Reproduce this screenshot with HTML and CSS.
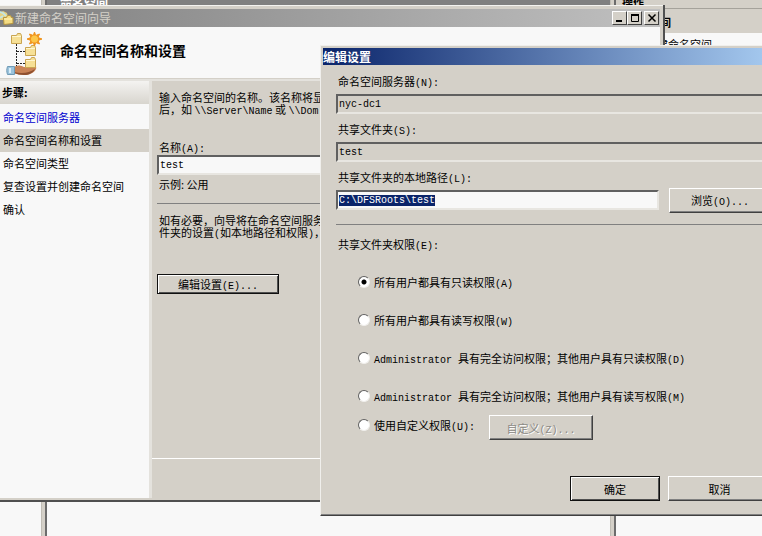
FILE: index.html
```html
<!DOCTYPE html>
<html lang="zh-CN">
<head>
    <meta charset="UTF-8">
    <meta name="viewport" content="width=device-width, initial-scale=1.0">
    <title>新建命名空间向导</title>
    <link rel="stylesheet" href="styles.css">
</head>
<body>
    <div class="desktop">
        <!-- Management console behind the wizard -->
        <div class="console">
            <div class="console-tree"></div>
            <div class="splitter"></div>
            <div class="console-main">
                <div class="console-title">命名空间</div>
            </div>
            <div class="splitter"></div>
            <div class="console-actions">
                <div class="actions-title">操作</div>
                <div class="actions-group">命名空间</div>
                <a class="actions-link" href="#">新建命名空间</a>
            </div>
        </div>

        <!-- Wizard window -->
        <section class="window wizard">
            <div class="titlebar titlebar-inactive">
                <svg class="titlebar-icon" width="14" height="16" viewBox="0 0 14 16">
                    <path d="M0 3l3-2 4 2 1 4-4 3H0z" fill="#e9d27c"/>
                    <path d="M0 2l3 1 3 3M0 8l3-2" fill="none" stroke="#c4e4e0" stroke-width="2"/>
                    <path d="M3.500 7.500h3l1-2h3l1 2h1.500v6l-9 1z" fill="#f4dc83" stroke="#b6953f"/>
                    <path d="M4 9h8" stroke="#fff4bd"/>
                </svg>
                <span class="titlebar-text">新建命名空间向导</span>
                <div class="titlebar-buttons">
                    <button class="caption-btn" aria-label="最小化">
                        <svg width="10" height="10" viewBox="0 0 10 10"><path d="M1 8h6" stroke="#000" stroke-width="2"/></svg>
                    </button>
                    <button class="caption-btn" aria-label="最大化">
                        <svg width="10" height="10" viewBox="0 0 10 10"><path d="M1.500 1v7.500h7V1" fill="none" stroke="#000"/><path d="M1 2h8" stroke="#000" stroke-width="2"/></svg>
                    </button>
                    <button class="caption-btn caption-close" aria-label="关闭">
                        <svg width="10" height="10" viewBox="0 0 10 10"><path d="M1.500 1.500l7 7M8.500 1.500l-7 7" stroke="#000" stroke-width="1.500"/></svg>
                    </button>
                </div>
            </div>

            <header class="wizard-header">
                <svg class="wizard-icon" width="38" height="46" viewBox="0 0 38 46">
                    <path d="M11.500 14v22M12 21.500h8M12 33.500h8" fill="none" stroke="#222" stroke-dasharray="2 1"/>
                    <!-- folders -->
                    <path d="M6.500 5.500h5l1-2h3l1 2v8h-10z" fill="#f6e096" stroke="#c9a552"/>
                    <path d="M7 6.500h9" stroke="#fff7d0"/>
                    <path d="M20.500 17.500h5l1-2h3l1 2v8h-10z" fill="#f6e096" stroke="#c9a552"/>
                    <path d="M21 18.500h9" stroke="#fff7d0"/>
                    <!-- star -->
                    <path d="M29.500 2l1.200 3.500L34.500 4 33 7.500l4 1.500-4 1.500 1.500 3.500-3.800-1.500L29.500 16l-1.200-3.500L24.500 14l1.500-3.500L22 9l4-1.500L24.500 4l3.800 1.500z" fill="#f0941c" stroke="#f0941c"/>
                    <circle cx="29.500" cy="9" r="3.500" fill="#fdc748"/>
                    <!-- hand -->
                    <path d="M9 37c4-2 7-2 10 0h8c3-1 5-1 4 2-2 4-7 6-12 6-4 0-7-1-10-2z" fill="#c98357"/>
                    <path d="M9 42c8 2 15 1 21-3-2 4-6 6-11 6-4 0-7-1-10-2z" fill="#8f5130"/>
                    <path d="M2.500 36.500h7v8h-7c-1-3-1-5 0-8z" fill="#9bc3dc" stroke="#6f9ab5"/>
                    <path d="M4 38h2v5H4z" fill="#d8edf8"/>
                    <path d="M20.500 29.500h5l1-2h3l1 2v8h-10z" fill="#f6e096" stroke="#c9a552"/>
                    <path d="M21 30.500h9" stroke="#fff7d0"/>
                </svg>
                <h1 class="wizard-title">命名空间名称和设置</h1>
            </header>

            <div class="wizard-body">
                <nav class="steps">
                    <h2 class="steps-title">步骤:</h2>
                    <ul class="steps-list">
                        <li><a href="#">命名空间服务器</a></li>
                        <li class="current">命名空间名称和设置</li>
                        <li>命名空间类型</li>
                        <li>复查设置并创建命名空间</li>
                        <li>确认</li>
                    </ul>
                </nav>

                <div class="wizard-page">
                    <div class="page-content">
                        <p class="hint">输入命名空间的名称。该名称将显<br>后，如 <span class="en">\\Server\Name</span> 或 <span class="en">\\Dom</span></p>
                        <label class="name-label" for="name">名称<span class="en">(A):</span></label>
                        <input class="field" type="text" id="name" value="test">
                        <p class="example">示例: 公用</p>
                        <hr class="line">
                        <p class="hint">如有必要，向导将在命名空间服务<br>件夹的设置<span class="en">(</span>如本地路径和权限<span class="en">)</span>，</p>
                        <button class="btn btn-default btn-edit">编辑设置<span class="en">(E)...</span></button>
                    </div>
                    <div class="page-footer"></div>
                </div>
            </div>
        </section>

        <!-- Edit settings dialog -->
        <section class="window dialog">
            <div class="titlebar titlebar-active">
                <span class="titlebar-text">编辑设置</span>
            </div>
            <form class="dialog-body">
                <label class="field-label" for="server">命名空间服务器<span class="en">(N):</span></label>
                <input class="field field-readonly" type="text" id="server" value="nyc-dc1" readonly>
                <label class="field-label" for="share">共享文件夹<span class="en">(S):</span></label>
                <input class="field field-readonly" type="text" id="share" value="test" readonly>
                <label class="field-label" for="path">共享文件夹的本地路径<span class="en">(L):</span></label>
                <div class="path-row">
                    <input class="field" type="text" id="path" value="C:\DFSRoots\test">
                    <button class="btn btn-browse" type="button">浏览<span class="en">(O)...</span></button>
                </div>
                <hr class="line">
                <fieldset class="permissions">
                    <legend class="field-label">共享文件夹权限<span class="en">(E):</span></legend>
                    <div class="option"><input type="radio" name="perm" id="perm-a" checked><label for="perm-a">所有用户都具有只读权限<span class="en">(A)</span></label></div>
                    <div class="option"><input type="radio" name="perm" id="perm-w"><label for="perm-w">所有用户都具有读写权限<span class="en">(W)</span></label></div>
                    <div class="option"><input type="radio" name="perm" id="perm-d"><label for="perm-d"><span class="en">Administrator </span>具有完全访问权限；其他用户具有只读权限<span class="en">(D)</span></label></div>
                    <div class="option"><input type="radio" name="perm" id="perm-m"><label for="perm-m"><span class="en">Administrator </span>具有完全访问权限；其他用户具有读写权限<span class="en">(M)</span></label></div>
                    <div class="option option-custom">
                        <input type="radio" name="perm" id="perm-u"><label for="perm-u">使用自定义权限<span class="en">(U):</span></label>
                        <button class="btn btn-custom" type="button" disabled>自定义<span class="en">(Z)...</span></button>
                    </div>
                </fieldset>
                <div class="dialog-footer">
                    <button class="btn btn-default" type="button">确定</button>
                    <button class="btn" type="button">取消</button>
                </div>
            </form>
        </section>
    </div>

    <script>
        // Start with the local path selected
        const path = document.getElementById('path');
        path.focus();
        path.select();
    </script>
</body>
</html>
```

FILE: styles.css
```css
* {
    box-sizing: border-box;
}

body {
    margin: 0;
    font-family: "Noto Sans CJK SC", sans-serif;
    font-size: 11px;
    line-height: 20px;
    color: #000;
    background: #f8f8f8;
}

h1, h2, p, ul {
    margin: 0;
    padding: 0;
}

.en {
    font-family: "Liberation Mono", monospace;
    font-size: 10px;
    line-height: 1;
    white-space: pre;
}

.desktop {
    position: relative;
    height: 100vh;
    overflow: hidden;
}

/* Console */
.console {
    display: flex;
    height: 100%;
}

.console-tree {
    width: 41px;
    background: #f8f8f8;
}

.splitter {
    width: 6px;
    background: #d4d0c8;
    border-left: 1px solid #c0bdb5;
    border-right: 2px solid #6c6c6c;
}

.console-main {
    flex: 1;
}

.console-title {
    height: 24px;
    padding-left: 13px;
    line-height: 6px;
    font-size: 12px;
    font-weight: bold;
    color: #fff;
    background: #808080;
}

.console-actions {
    width: 146px;
}

.actions-title {
    height: 9px;
    padding-left: 6px;
    line-height: 4px;
    font-weight: bold;
    background: #d4d0c8;
    border-bottom: 1px solid #a5a29b;
}

.actions-group {
    height: 24px;
    padding-left: 11px;
    line-height: 27px;
    font-weight: bold;
    background: #d4d0c8;
}

.actions-link {
    display: block;
    padding-left: 30px;
    line-height: 22px;
    color: #000;
    text-decoration: none;
}

/* Windows */
.window {
    position: absolute;
    display: flex;
    flex-direction: column;
    background: #d4d0c8;
}

.titlebar {
    display: flex;
    align-items: center;
    height: 17px;
    font-size: 12px;
    white-space: nowrap;
}

.titlebar-inactive {
    height: 18px;
    color: #d4d0c8;
    background: linear-gradient(to right, #808080, #c0c0c0);
}

.titlebar-active {
    color: #fff;
    font-weight: bold;
    background: linear-gradient(to right, #0a246a, #a6caf0);
}

.titlebar-icon {
    margin-right: 1px;
}

.titlebar-text {
    flex: 1;
}

.titlebar-buttons {
    display: flex;
    padding-right: 1px;
}

.caption-btn {
    display: flex;
    align-items: center;
    justify-content: center;
    width: 15px;
    height: 14px;
    padding: 0;
    background: #d4d0c8;
    border: 1px solid;
    border-color: #fff #404040 #404040 #fff;
}

.caption-close {
    margin-left: 2px;
}

.wizard {
    top: 5px;
    bottom: 34px;
    left: 0;
    right: 97px;
    padding: 4px 3px 2px 0;
    border-right: 2px solid #505050;
    border-bottom: 2px solid #505050;
    box-shadow: inset 0 1px #f4f3f0;
}

.wizard-header {
    display: flex;
    align-items: center;
    height: 52px;
    padding-left: 5px;
    background: #f8f8f8;
    border-bottom: 1px solid #d4d0c8;
}

.wizard-title {
    margin-left: 17px;
    padding-bottom: 6px;
    font-size: 14px;
    font-weight: bold;
}

.wizard-body {
    display: flex;
    flex: 1;
    border-top: 2px solid #e4e2dd;
}

.steps {
    width: 152px;
    background: #f8f8f8;
    border-right: 3px solid #e4e2dd;
}

.steps-title {
    height: 23px;
    padding-left: 2px;
    font-size: 11px;
    font-weight: bold;
    line-height: 23px;
    background: linear-gradient(to bottom, #f4f3f1, #d8d5ce);
}

.steps-list {
    padding-top: 2px;
    list-style: none;
}

.steps-list li {
    padding-left: 3px;
    line-height: 23px;
}

.steps-list a {
    color: #0000d0;
    text-decoration: none;
}

.steps-list .current {
    background: #d4d0c8;
}

.wizard-page {
    display: flex;
    flex: 1;
    flex-direction: column;
}

.page-content {
    display: flex;
    flex: 1;
    flex-direction: column;
    padding: 10px 5px 0;
}

.page-footer {
    height: 40px;
    border-top: 1px solid #fff;
}

.hint {
    padding-left: 2px;
    line-height: 12px;
    white-space: nowrap;
}

.name-label {
    margin-top: 22px;
    padding-left: 2px;
    line-height: 16px;
}

.example {
    padding-left: 2px;
    line-height: 18px;
}

.line {
    width: 100%;
    height: 1px;
    margin: 10px 0;
    background: #808080;
    border: 0;
}

/* Controls */
.field {
    display: block;
    width: 100%;
    height: 20px;
    padding: 0 1px;
    font-family: "Liberation Mono", monospace;
    font-size: 10px;
    color: #000;
    background: #f8f8f8;
    border: 2px solid;
    border-color: #606060 #e8e6e1 #e8e6e1 #606060;
    outline: none;
}

.field::selection {
    color: #fff;
    background: #0a246a;
}

.field-readonly {
    background: #d4d0c8;
}

.btn {
    width: 104px;
    height: 25px;
    padding: 0;
    font-family: inherit;
    font-size: 11px;
    line-height: 20px;
    color: #000;
    background: #d4d0c8;
    border: 1px solid;
    border-color: #fff #404040 #404040 #fff;
    box-shadow: inset -1px -1px #808080;
}

.btn-default {
    border: 1px solid #101010;
    box-shadow: inset 1px 1px #fff, inset -1px -1px #505050;
}

.btn:disabled {
    color: #8c8a85;
    text-shadow: 1px 1px #fff;
}

.btn-edit {
    width: 122px;
    height: 20px;
    margin-top: 34px;
    line-height: 16px;
}

/* Dialog */
.dialog {
    top: 45px;
    left: 320px;
    right: -12px;
    padding: 2px;
    border: 1px solid;
    border-color: #f0efec #404040 #404040 #f0efec;
    box-shadow: inset -1px -1px #808080;
}

.dialog-body {
    padding: 7px 0 12px 13px;
}

.field-label {
    display: block;
    height: 20px;
    margin-bottom: 2px;
    padding: 0 2px;
    line-height: 18px;
}

.field + .field-label {
    margin-top: 6px;
}

.path-row {
    display: flex;
    gap: 10px;
    height: 20px;
    align-items: center;
}

.path-row .field {
    flex: 1;
}

.btn-browse {
    width: 102px;
}

.dialog-body .line {
    margin-top: 14px;
}

.permissions {
    margin: 0;
    padding: 0 0 0 22px;
    border: 0;
}

.permissions legend {
    margin: 0 0 8px -22px;
}

.option {
    display: flex;
    align-items: center;
    height: 38px;
    white-space: nowrap;
}

.option input {
    width: 12px;
    height: 12px;
    margin: 0 4px 0 0;
    appearance: none;
    background: #fff;
    border: 1px solid;
    border-color: #606060 #f0efec #f0efec #606060;
    border-radius: 50%;
}

.option input:checked {
    background: radial-gradient(circle, #000 2px, #fff 3px);
}

.option-custom {
    align-items: flex-start;
    height: 26px;
}

.option-custom input {
    margin-top: 4px;
}

.btn-custom {
    margin-left: 14px;
}

.dialog-footer {
    display: flex;
    justify-content: flex-end;
    gap: 8px;
    margin-top: 35px;
}

.dialog-footer .btn {
    width: 90px;
}

.dialog-footer .btn:last-child {
    width: 103px;
}
```
